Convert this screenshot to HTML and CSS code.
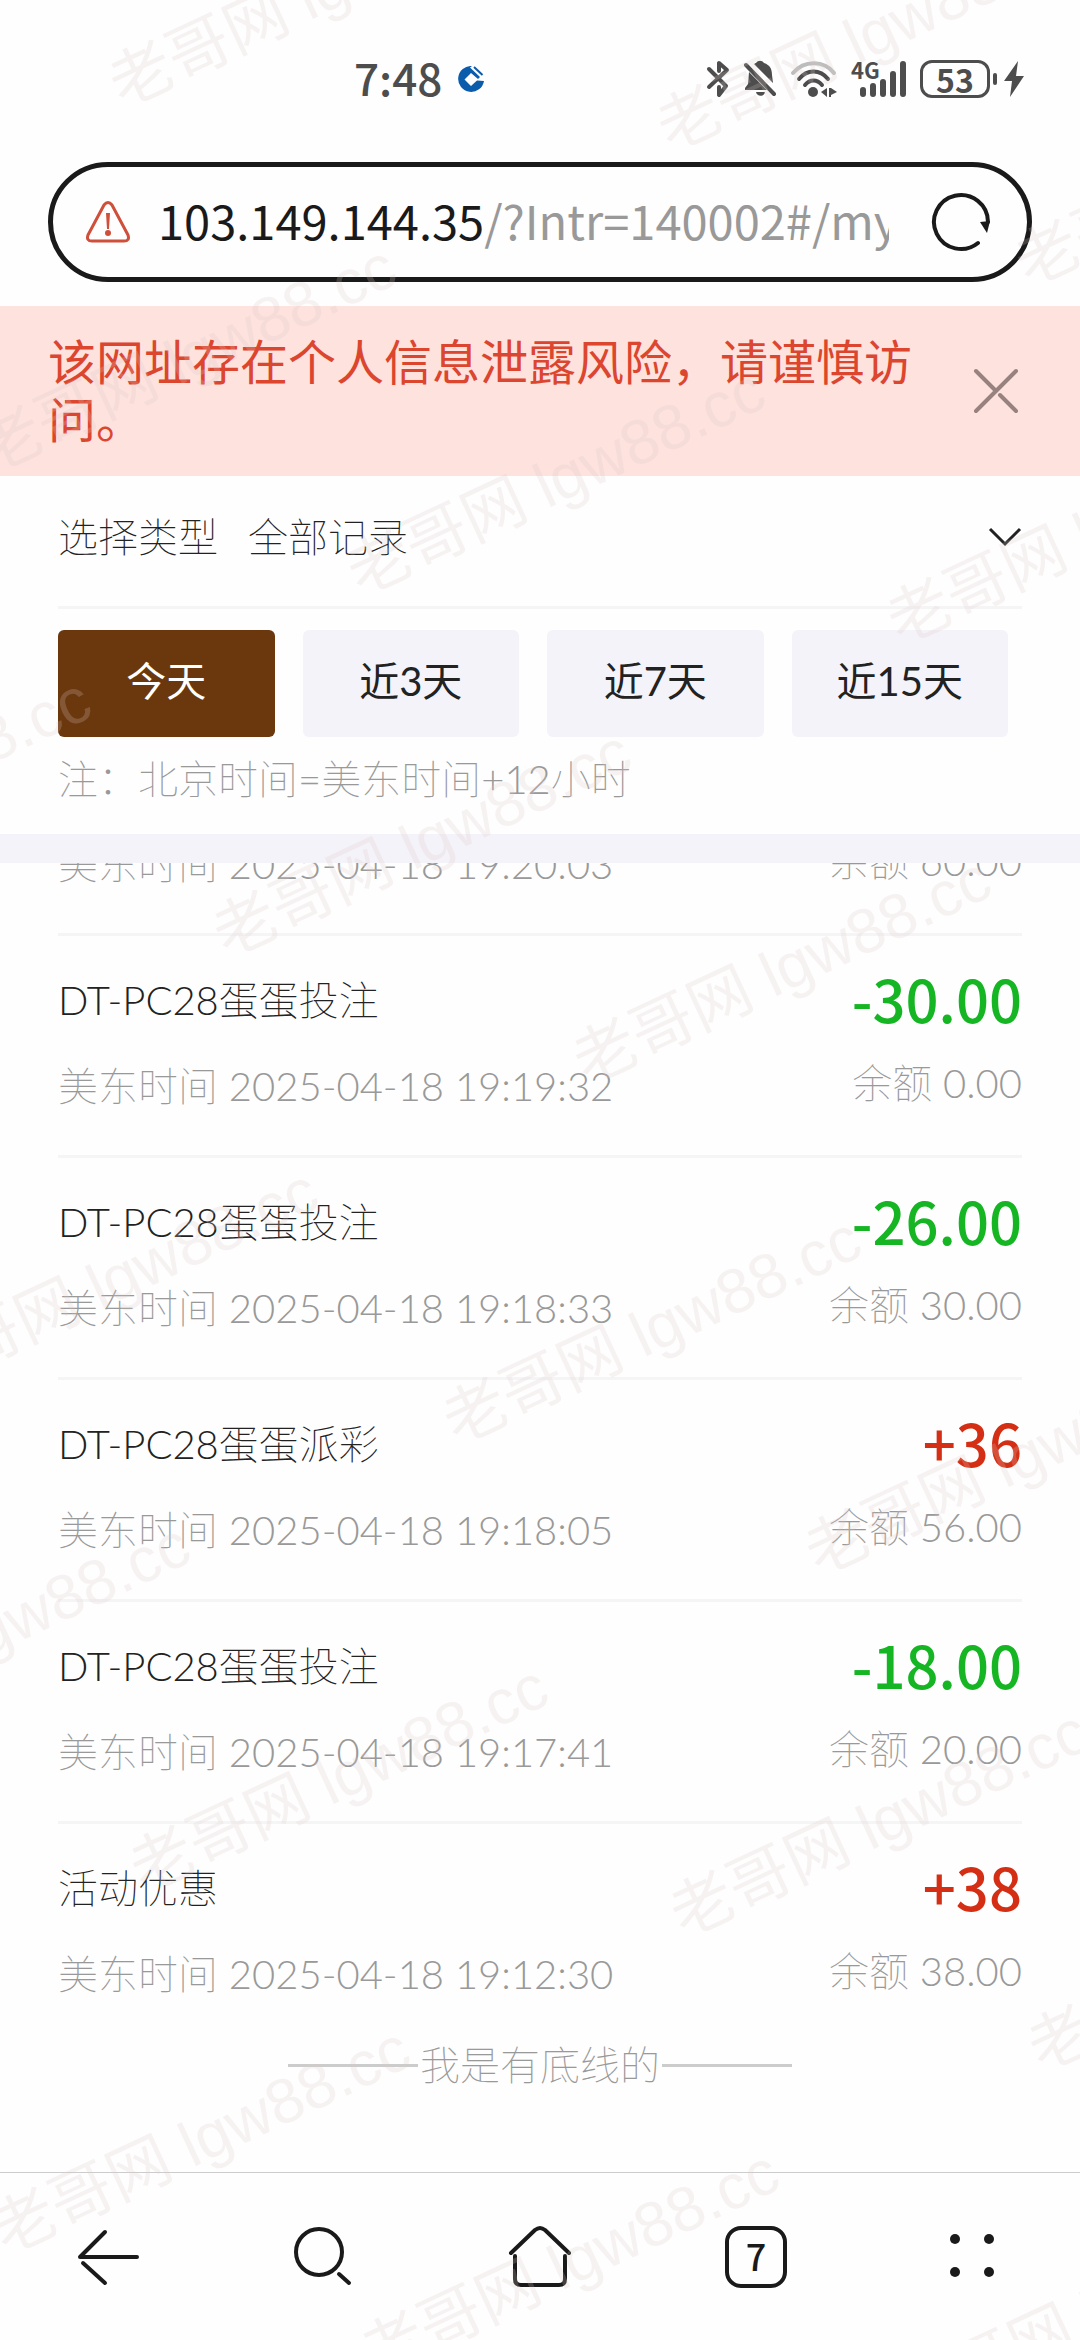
FILE: index.html
```html
<!DOCTYPE html>
<html lang="zh-CN">
<head>
  <meta charset="UTF-8">
  <meta name="viewport" content="width=device-width, initial-scale=1.0">
  <title>账户明细</title>
  <link rel="stylesheet" href="styles.css">
</head>
<body>
  <div class="status-bar">
    <div class="status-left">
      <span class="clock">7:48</span>
      <svg class="bank-icon" viewBox="0 0 26 26">
        <path fill="#0b5cab" d="M14 0 A13 13 0 1 0 26 15 L19 14.5 L13 20 L6.500 13.500 L13 7 L20 13 L22 11 L12 1.500 Z"/>
        <path fill="none" stroke="#0b5cab" stroke-width="2" d="M16 1 L24.500 9"/>
      </svg>
    </div>
    <div class="status-right">
      <svg width="24" height="38" viewBox="0 0 24 38" fill="none" stroke="#4d4d4d" stroke-width="4" stroke-linecap="round" stroke-linejoin="round">
        <path d="M3 9 L20 26 L13 35 V27"/>
        <path d="M3 27 L21 10 L13 3 V11"/>
      </svg>
      <svg width="34" height="38" viewBox="0 0 34 38" fill="#4d4d4d">
        <path d="M11 4 C13 3 12 3 13 3 C15 0 19 0 21 3 C27 5 29 9 29 15 L30 23 Z"/>
        <path d="M6 12 L24 30 H2 V28 L5 24 Z"/>
        <path d="M13 32 H22 C21 37 14 37 13 32 Z"/>
        <path stroke="#4d4d4d" stroke-width="4" stroke-linecap="round" d="M3 5 L31 34"/>
      </svg>
      <svg width="48" height="38" viewBox="0 0 48 38" fill="none" stroke="#4d4d4d" stroke-width="4" stroke-linecap="round">
        <path stroke="#bdbdbd" d="M3 13 C14 0 34 0 44 13"/>
        <path d="M9 19 C17 9 30 9 38 19"/>
        <path d="M15 25 C20 19 27 19 32 25"/>
        <circle cx="23" cy="32" r="5" fill="#4d4d4d" stroke="none"/>
        <path fill="#4d4d4d" stroke="none" d="M37 28 V37 L31 32 Z M39 28 V37 H41 V35 L47 32 L41 28 Z"/>
      </svg>
      <div class="signal">
        <span class="network">4G</span>
        <svg width="48" height="38" viewBox="0 0 48 38" stroke="#4d4d4d" stroke-width="6" stroke-linecap="round">
          <path d="M4 30 V34 M14 26 V34 M24 22 V34 M34 14 V34 M44 4 V34"/>
        </svg>
      </div>
      <div class="battery">
        <span class="battery-level">53</span>
        <span class="battery-cap"></span>
        <svg width="20" height="38" viewBox="0 0 20 38" fill="#4d4d4d">
          <path d="M14 1 L0 21 H8 L6 37 L20 16 H12 Z"/>
        </svg>
      </div>
    </div>
  </div>

  <div class="address-bar">
    <svg class="warn-icon" viewBox="0 0 44 42" fill="none" stroke="#cf4f3a" stroke-width="3" stroke-linejoin="round">
      <path d="M18 4 Q22 -1 26 4 L42 34 Q44 40 38 40 H6 Q0 40 2 34 Z"/>
      <path stroke="none" fill="#cf4f3a" d="M20 12 H24 L23 28 H21 Z"/>
      <circle cx="22" cy="32" r="3" fill="#cf4f3a" stroke="none"/>
    </svg>
    <button class="url" type="button"><span class="host">103.149.144.35</span>/?Intr=140002#/my</button>
    <button class="icon-button" type="button" aria-label="刷新">
      <svg width="60" height="60" viewBox="0 0 60 60" fill="none" stroke="#1a1a1a" stroke-width="4" stroke-linecap="round">
        <path d="M47 51 A27 27 0 1 1 57 30"/>
        <path fill="#1a1a1a" stroke="none" d="M49 30 L59 29 L56 41 Z"/>
      </svg>
    </button>
  </div>

  <div class="notice">
    <p class="notice-text">该网址存在个人信息泄露风险，请谨慎访问。</p>
    <button class="icon-button" type="button" aria-label="关闭">
      <svg width="46" height="46" viewBox="0 0 46 46" fill="none" stroke="#98827f" stroke-width="4" stroke-linecap="round">
        <path d="M3 43 L43 3 M3 3 L22 22 M27 27 L43 43"/>
      </svg>
    </button>
  </div>

  <div class="filters">
    <div class="type-row">
      <label for="recordType">选择类型</label>
      <select id="recordType" class="type-select">
        <option>全部记录</option>
      </select>
      <svg class="chevron" viewBox="0 0 34 20" fill="none" stroke="#222" stroke-width="3">
        <path d="M2 2 L17 17 L32 2"/>
      </svg>
    </div>
    <div class="ranges">
      <button class="range active" type="button">今天</button>
      <button class="range" type="button">近3天</button>
      <button class="range" type="button">近7天</button>
      <button class="range" type="button">近15天</button>
    </div>
    <p class="hint">注：北京时间=美东时间+12小时</p>
  </div>

  <div class="records">
    <ul class="record-list">
      <li class="record">
        <div class="record-meta"><span class="time">美东时间 2025-04-18 19:20:03</span><span class="balance">余额 60.00</span></div>
      </li>
      <li class="record">
        <div class="record-main"><span>DT-PC28蛋蛋投注</span><span class="amount out">-30.00</span></div>
        <div class="record-meta"><span class="time">美东时间 2025-04-18 19:19:32</span><span class="balance">余额 0.00</span></div>
      </li>
      <li class="record">
        <div class="record-main"><span>DT-PC28蛋蛋投注</span><span class="amount out">-26.00</span></div>
        <div class="record-meta"><span class="time">美东时间 2025-04-18 19:18:33</span><span class="balance">余额 30.00</span></div>
      </li>
      <li class="record">
        <div class="record-main"><span>DT-PC28蛋蛋派彩</span><span class="amount in">+36</span></div>
        <div class="record-meta"><span class="time">美东时间 2025-04-18 19:18:05</span><span class="balance">余额 56.00</span></div>
      </li>
      <li class="record">
        <div class="record-main"><span>DT-PC28蛋蛋投注</span><span class="amount out">-18.00</span></div>
        <div class="record-meta"><span class="time">美东时间 2025-04-18 19:17:41</span><span class="balance">余额 20.00</span></div>
      </li>
      <li class="record">
        <div class="record-main"><span>活动优惠</span><span class="amount in">+38</span></div>
        <div class="record-meta"><span class="time">美东时间 2025-04-18 19:12:30</span><span class="balance">余额 38.00</span></div>
      </li>
    </ul>
    <div class="list-end">我是有底线的</div>
  </div>

  <nav class="toolbar">
    <button class="tool" type="button" aria-label="后退">
      <svg viewBox="0 0 64 64"><path d="M61 32 H4 L29 7 M7 38 L29 58"/></svg>
    </button>
    <button class="tool" type="button" aria-label="搜索">
      <svg viewBox="0 0 64 64"><circle cx="27" cy="27" r="23"/><path d="M47 49 L57 58"/></svg>
    </button>
    <button class="tool" type="button" aria-label="主页">
      <svg viewBox="0 0 64 64"><path d="M3 28 L27 5 Q32 1 37 5 L61 28 M7 31 V54 Q7 60 13 60 H51 Q57 60 57 54 V31"/></svg>
    </button>
    <button class="tool" type="button" aria-label="标签页">
      <span class="tab-count">7</span>
    </button>
    <button class="tool" type="button" aria-label="菜单">
      <svg class="dots" viewBox="0 0 64 64"><circle cx="15" cy="14" r="5"/><circle cx="49" cy="14" r="5"/><circle cx="15" cy="47" r="5"/><circle cx="49" cy="47" r="5"/></svg>
    </button>
  </nav>

  <!-- Diagonal watermark over the whole screen -->
  <svg class="watermark" aria-hidden="true">
    <text transform="translate(141 75) rotate(-25)" x="-31" y="22">老哥网 lgw88.cc</text>
    <text transform="translate(689 119) rotate(-25)" x="-31" y="22">老哥网 lgw88.cc</text>
    <text transform="translate(1047 254) rotate(-25)" x="-31" y="22">老哥网 lgw88.cc</text>
    <text transform="translate(10 440) rotate(-25)" x="-31" y="22">老哥网 lgw88.cc</text>
    <text transform="translate(379 563) rotate(-25)" x="-31" y="22">老哥网 lgw88.cc</text>
    <text transform="translate(919 612) rotate(-25)" x="-31" y="22">老哥网 lgw88.cc</text>
    <text transform="translate(-295 873) rotate(-25)" x="-31" y="22">老哥网 lgw88.cc</text>
    <text transform="translate(245 925) rotate(-25)" x="-31" y="22">老哥网 lgw88.cc</text>
    <text transform="translate(605 1052) rotate(-25)" x="-31" y="22">老哥网 lgw88.cc</text>
    <text transform="translate(-68 1364) rotate(-25)" x="-31" y="22">老哥网 lgw88.cc</text>
    <text transform="translate(475 1412) rotate(-25)" x="-31" y="22">老哥网 lgw88.cc</text>
    <text transform="translate(837 1543) rotate(-25)" x="-31" y="22">老哥网 lgw88.cc</text>
    <text transform="translate(-196 1718) rotate(-25)" x="-31" y="22">老哥网 lgw88.cc</text>
    <text transform="translate(162 1860) rotate(-25)" x="-31" y="22">老哥网 lgw88.cc</text>
    <text transform="translate(702 1905) rotate(-25)" x="-31" y="22">老哥网 lgw88.cc</text>
    <text transform="translate(1060 2039) rotate(-25)" x="-31" y="22">老哥网 lgw88.cc</text>
    <text transform="translate(24 2222) rotate(-25)" x="-31" y="22">老哥网 lgw88.cc</text>
    <text transform="translate(393 2345) rotate(-25)" x="-31" y="22">老哥网 lgw88.cc</text>
    <text transform="translate(926 2390) rotate(-25)" x="-31" y="22">老哥网 lgw88.cc</text>
  </svg>
</body>
</html>
```
FILE: styles.css
```css
* {
  margin: 0;
  padding: 0;
  box-sizing: border-box;
}

body {
  position: relative;
  display: flex;
  flex-direction: column;
  height: 100vh;
  overflow: hidden;
  background: #fefefe;
  color: #222;
  font-family: "Lato Light", Lato, "Noto Sans CJK SC", sans-serif;
  font-size: 40px;
  font-weight: 100;
  line-height: 40px;
}

button,
select {
  border: none;
  background: none;
  color: inherit;
  font: inherit;
}

svg {
  display: block;
  flex-shrink: 0;
}

/* System status bar */
.status-bar {
  display: flex;
  justify-content: space-between;
  align-items: center;
  height: 158px;
  padding: 0 56px 0 354px;
  color: #4d4d4d;
  font-family: "Noto Sans CJK SC", sans-serif;
}

.status-left,
.status-right,
.battery {
  display: flex;
  align-items: center;
}

.status-left {
  gap: 16px;
}

.clock {
  font-size: 44px;
  font-weight: 500;
  line-height: 44px;
  padding-bottom: 4px;
}

.bank-icon {
  width: 26px;
  height: 26px;
}

.status-right {
  gap: 13px;
}

.signal {
  position: relative;
  padding-left: 8px;
}

.network {
  position: absolute;
  top: 0;
  left: 0;
  font-size: 22px;
  font-weight: 700;
  line-height: 18px;
}

.battery {
  gap: 3px;
}

.battery-level {
  width: 70px;
  border: 3px solid #4d4d4d;
  border-radius: 12px;
  font-size: 32px;
  font-weight: 700;
  line-height: 32px;
  text-align: center;
}

.battery-cap {
  width: 4px;
  height: 12px;
  margin-right: 4px;
  border-radius: 2px;
  background: #4d4d4d;
}

/* Address bar */
.address-bar {
  display: flex;
  align-items: center;
  height: 120px;
  margin: 4px 48px 24px;
  padding: 0 36px 0 33px;
  border: 5px solid #1a1a1a;
  border-radius: 60px;
}

.warn-icon {
  width: 44px;
  height: 42px;
  margin-right: 28px;
}

.url {
  flex: 1;
  min-width: 0;
  margin-right: 42px;
  padding-bottom: 4px;
  overflow: hidden;
  color: #999;
  font-family: "Noto Sans CJK SC", sans-serif;
  font-size: 47px;
  font-weight: 400;
  line-height: 72px;
  text-align: left;
  white-space: nowrap;
}

.host {
  color: #1a1a1a;
}

.icon-button {
  display: flex;
}

/* Risk notice */
.notice {
  display: flex;
  justify-content: space-between;
  align-items: center;
  gap: 48px;
  padding: 27px 61px 27px 48px;
  background: #fde2de;
}

.notice-text {
  color: #dc452e;
  font-size: 48px;
  font-weight: 400;
  line-height: 58px;
}

/* Filters */
.filters {
  padding: 0 58px 35px;
  border-bottom: 29px solid #f4f3f9;
}

.type-row {
  display: flex;
  align-items: center;
  height: 133px;
  padding-bottom: 8px;
  border-bottom: 3px solid #f5f5f6;
}

.type-select {
  flex: 1;
  margin-left: 30px;
  appearance: none;
  outline: none;
}

.chevron {
  width: 34px;
  height: 20px;
}

.ranges {
  display: grid;
  grid-template-columns: repeat(4, 1fr);
  gap: 28px;
  padding: 21px 14px 22px 0;
}

.range {
  height: 107px;
  padding-bottom: 6px;
  border-radius: 6px;
  background: #f4f3f9;
  font-family: Lato, "Noto Sans CJK SC", sans-serif;
  font-weight: 400;
}

.range.active {
  background: #6b380d;
  color: #fff;
}

.hint {
  color: #999;
}

/* Records, scrolled to the bottom of the list */
.records {
  display: flex;
  flex: 1;
  flex-direction: column;
  justify-content: flex-end;
  min-height: 0;
  padding: 0 58px 87px;
  overflow: hidden;
}

.record-list {
  list-style: none;
}

.record {
  padding: 34px 0 46px;
  border-bottom: 3px solid #f5f5f6;
}

.record:last-child {
  padding-bottom: 48px;
  border-bottom: none;
}

.record-main,
.record-meta {
  display: flex;
  justify-content: space-between;
}

.record-main {
  align-items: center;
  margin-bottom: 33px;
}

.record-meta {
  color: #999;
}

.time {
  line-height: 46px;
}

.balance {
  line-height: 40px;
}

.amount {
  font-family: "Noto Sans CJK SC", sans-serif;
  font-size: 58px;
  font-weight: 500;
  line-height: 56px;
  padding-bottom: 4px;
}

.amount.out {
  color: #16b524;
}

.amount.in {
  color: #d42f14;
}

.list-end {
  display: flex;
  justify-content: center;
  align-items: center;
  gap: 2px;
  color: #999;
}

.list-end::before,
.list-end::after {
  content: '';
  width: 130px;
  height: 3px;
  background: #ccc;
}

/* Bottom toolbar */
.toolbar {
  display: grid;
  grid-template-columns: repeat(5, 1fr);
  height: 168px;
  border-top: 1px solid #ccc;
}

.tool {
  display: flex;
  justify-content: center;
  align-items: center;
}

.tool svg {
  width: 64px;
  height: 64px;
  fill: none;
  stroke: #1a1a1a;
  stroke-width: 4;
  stroke-linecap: round;
  stroke-linejoin: round;
}

.tool .dots {
  fill: #1a1a1a;
  stroke: none;
}

.tab-count {
  width: 62px;
  height: 62px;
  border: 4px solid #1a1a1a;
  border-radius: 16px;
  color: #1a1a1a;
  font-family: "Noto Sans CJK SC", sans-serif;
  font-size: 36px;
  font-weight: 500;
  line-height: 50px;
}

.watermark {
  position: absolute;
  top: 0;
  left: 0;
  width: 100%;
  height: 100%;
  pointer-events: none;
  font-family: "Liberation Sans", "Noto Sans CJK SC", sans-serif;
  font-size: 63px;
  font-weight: 400;
  fill: rgba(222, 200, 200, 0.22);
}
```
